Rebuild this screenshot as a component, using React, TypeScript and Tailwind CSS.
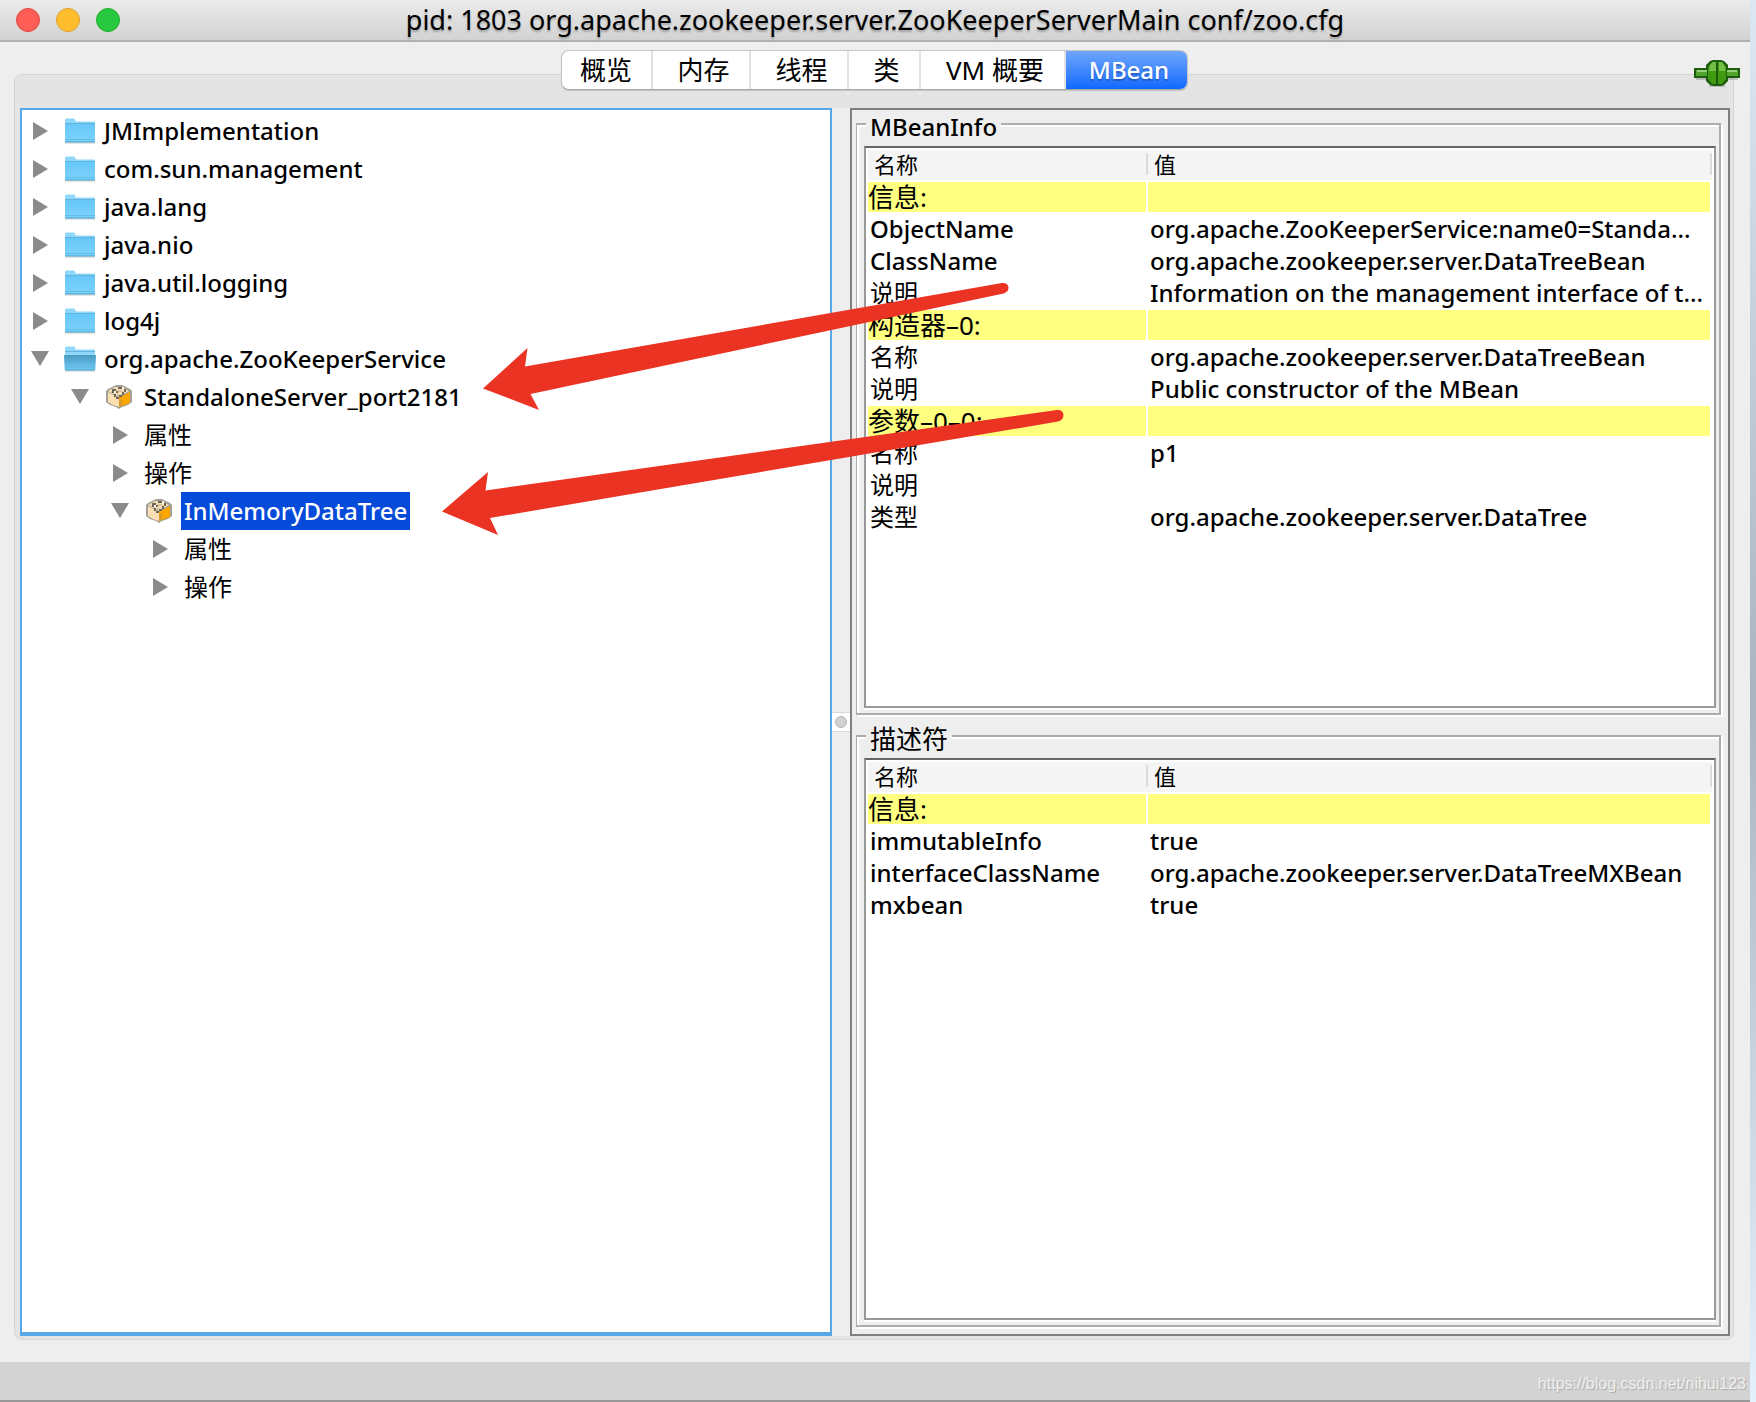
import type { ReactNode } from "react";

type IconKind = "folder" | "folder-open" | "bean";

interface TreeItem {
  label: string;
  level: number;
  open?: boolean;
  icon?: IconKind;
  selected?: boolean;
}

interface Row {
  name: string;
  value?: string;
  heading?: boolean;
}

const tabs = [
  { label: "概览", size: "w-[91px] text-[26px]" },
  { label: "内存", size: "w-[98px] pl-1.5 text-[26px]" },
  { label: "线程", size: "w-[98px] pl-1.5 text-[26px]" },
  { label: "类", size: "w-[72px] pl-1.5 text-[26px]" },
  { label: "VM 概要", size: "w-[145px] pl-1.5 text-[26px]" },
  { label: "MBean", size: "w-[121px] pl-1.5 text-[24px] font-medium", active: true },
];

const tree: TreeItem[] = [
  { label: "JMImplementation", level: 0, icon: "folder" },
  { label: "com.sun.management", level: 0, icon: "folder" },
  { label: "java.lang", level: 0, icon: "folder" },
  { label: "java.nio", level: 0, icon: "folder" },
  { label: "java.util.logging", level: 0, icon: "folder" },
  { label: "log4j", level: 0, icon: "folder" },
  { label: "org.apache.ZooKeeperService", level: 0, icon: "folder-open", open: true },
  { label: "StandaloneServer_port2181", level: 1, icon: "bean", open: true },
  { label: "属性", level: 2 },
  { label: "操作", level: 2 },
  { label: "InMemoryDataTree", level: 2, icon: "bean", open: true, selected: true },
  { label: "属性", level: 3 },
  { label: "操作", level: 3 },
];

const beanInfo: Row[] = [
  { name: "信息:", heading: true },
  { name: "ObjectName", value: "org.apache.ZooKeeperService:name0=Standa..." },
  { name: "ClassName", value: "org.apache.zookeeper.server.DataTreeBean" },
  { name: "说明", value: "Information on the management interface of t..." },
  { name: "构造器–0:", heading: true },
  { name: "名称", value: "org.apache.zookeeper.server.DataTreeBean" },
  { name: "说明", value: "Public constructor of the MBean" },
  { name: "参数–0–0:", heading: true },
  { name: "名称", value: "p1" },
  { name: "说明" },
  { name: "类型", value: "org.apache.zookeeper.server.DataTree" },
];

const descriptor: Row[] = [
  { name: "信息:", heading: true },
  { name: "immutableInfo", value: "true" },
  { name: "interfaceClassName", value: "org.apache.zookeeper.server.DataTreeMXBean" },
  { name: "mxbean", value: "true" },
];

const indents = ["pl-[9px]", "pl-[49px]", "pl-[89px]", "pl-[129px]"];

// Latin labels are set one step heavier than Chinese ones
function weight(text: string) {
  return /^[\u4e00-\u9fff]/.test(text) ? "font-normal" : "font-medium";
}

function Folder({ open }: { open?: boolean }) {
  return (
    <svg width="32" height="26" viewBox="0 0 32 26" className="shrink-0">
      <defs>
        <linearGradient id="folderFront" x1="0" y1="0" x2="0" y2="1">
          <stop offset="0" stopColor="#66c8f8" />
          <stop offset="1" stopColor="#7dd2fb" />
        </linearGradient>
        <linearGradient id="folderOpen" x1="0" y1="0" x2="0" y2="1">
          <stop offset="0" stopColor="#4a9cc4" />
          <stop offset="1" stopColor="#72c9f2" />
        </linearGradient>
      </defs>
      <path d="M1 24.5h30v1H1z" fill="#c9c9c9" />
      <path d="M1 2q0-1.500 1.500-1.500h7q1 0 1.500 1l.5 1.500q.3 .5 1 .5H30q1 0 1 1V24H1z" fill="#8fd8fc" />
      <path d="M1 5.500h30" stroke="#62b4dc" strokeWidth="1" fill="none" />
      {open ? (
        <path d="M0 9h32l-.7 15H.7z" fill="url(#folderOpen)" />
      ) : (
        <path d="M1 6h30v18H1z" fill="url(#folderFront)" />
      )}
      <path d="M1 21.500h30" stroke="#62bdea" strokeWidth="1" />
      <path d="M1 24h30" stroke="#3f9dcb" strokeWidth="1" />
    </svg>
  );
}

function Bean() {
  return (
    <svg width="26" height="24" viewBox="0 0 26 24" className="shrink-0">
      <path d="M10 0h6l4 2 4 2 2 2v11l-4 3-6 2-3 2-3-2-6-2-4-3V6l2-2 4-2z" fill="#a3a097" />
      <path d="M9 2h7l7 4-10 6L2 6z" fill="#f3dcb4" />
      <path d="M2 7l11 6v9l-6-2-5-3z" fill="#fbdfb2" />
      <path d="M13 13l11-6v11l-11 4z" fill="#ffa500" />
      <path d="M6 4h4v2H8v2H6zM12 2h4v2h-4zM8 9h2v3H8zM10 12h3v2h-3zM13 10h3v2h-3zM16 7h2v3h-2zM18 4h2v3h-2zM10 6h2v2h-2z" fill="#6f665a" />
      <path d="M12 5h4v2h-4zM11 9h2v2h-2z" fill="#d9c39b" />
      <path d="M16 2h2v3h-2zM8 6h2v2H8z" fill="#fff3dc" />
      <path d="M13 15l3-1v6l-3 2z" fill="#d99a2b" />
    </svg>
  );
}

function Plug() {
  return (
    <svg width="46" height="28" viewBox="0 0 46 28">
      <path d="M2 18h42v2H2zM15 25h16v2H15z" fill="#000" opacity=".18" />
      <path d="M0 8h12V5l4-4 3-1h8l3 1 4 4v3h12v10H34v3l-4 4-3 1h-8l-3-1-4-4v-3H0z" fill="#1d5c0c" />
      <path d="M2 10h11v6H2zM33 10h11v6H33z" fill="#4fa52c" />
      <path d="M3 10h10v2H3zM33 10h10v2H33z" fill="#93cf78" />
      <path d="M14 7l4-5h4v22h-4l-4-5zM24 2h4l4 5v12l-4 5h-4z" fill="#3f9a12" />
      <path d="M16 5l3-3h3v9h-7zM25 2h3l3 4v5h-6z" fill="#74bf45" />
    </svg>
  );
}

function TreeNode({ item }: { item: TreeItem }) {
  return (
    <li role="treeitem" aria-expanded={!!item.open} className={`flex h-[38px] items-center ${indents[item.level]}`}>
      <svg width="18" height="20" viewBox="0 0 18 20" className="shrink-0">
        {item.open ? <path d="M0 2h18L9 17z" fill="#8b8b8b" /> : <path d="M2 1v18l15-9z" fill="#8b8b8b" />}
      </svg>
      {item.icon && (
        <span className={item.icon === "bean" ? "ml-[17px] w-[26px]" : "ml-[15px] w-8"}>
          {item.icon === "bean" ? <Bean /> : <Folder open={item.icon === "folder-open"} />}
        </span>
      )}
      <span
        className={`flex h-full items-center whitespace-nowrap px-[3px] ${weight(item.label)} ${
          item.icon === "bean" ? "ml-[9px]" : item.icon ? "ml-[5px]" : "ml-3"
        } ${item.selected ? "bg-[#064ada] text-white" : ""}`}
      >
        {item.label}
      </span>
    </li>
  );
}

function AttributeTable({ rows, label }: { rows: Row[]; label: string }) {
  return (
    <div className="flex-1 border-2 border-[#999] border-t-[#666] bg-white p-0.5 shadow-[0_2px_0_#fff]">
      <table aria-label={label} className="w-full table-fixed border-collapse text-left">
        <colgroup>
          <col className="w-[280px]" />
          <col />
        </colgroup>
        <thead>
          <tr className="h-[30px] bg-[#f5f5f5] text-[22px] leading-7">
            <th className="p-0 align-top font-normal">
              <div className="flex items-center justify-between pl-1.5">
                名称
                <span className="h-[22px] w-0.5 bg-[#dcdcdc]" />
              </div>
            </th>
            <th className="p-0 align-top font-normal">
              <div className="flex items-center justify-between pl-1.5">
                值
                <span className="h-[22px] w-0.5 bg-[#dcdcdc]" />
              </div>
            </th>
          </tr>
        </thead>
        <tbody>
          {rows.map((row, i) => (
            <tr key={i} className="h-8 leading-[30px]">
              <td className="p-0 pt-0.5">
                <div
                  className={
                    row.heading
                      ? "mr-0.5 h-[30px] bg-[#ffff80] text-[26px]"
                      : `h-[30px] whitespace-nowrap pl-0.5 ${weight(row.name)}`
                  }
                >
                  {row.name}
                </div>
              </td>
              <td className="p-0 pt-0.5">
                <div className={row.heading ? "mr-0.5 h-[30px] bg-[#ffff80]" : "h-[30px] whitespace-nowrap pl-0.5 font-medium"}>
                  {row.value}
                </div>
              </td>
            </tr>
          ))}
        </tbody>
      </table>
    </div>
  );
}

function Group({ title, titleStyle, className, children }: { title: string; titleStyle: string; className: string; children: ReactNode }) {
  return (
    <section
      className={`relative flex flex-col border-2 border-l border-[#adadad] pb-[5px] pl-[7px] pr-[3px] pt-[21px] shadow-[2px_2px_0_#fff,inset_2px_2px_0_#fff] ${className}`}
    >
      <h2 className={`absolute -top-3 left-[9px] bg-[#eee] px-1 leading-7 ${titleStyle}`}>{title}</h2>
      {children}
    </section>
  );
}

export default function App() {
  return (
    <div className="relative flex min-h-screen overflow-hidden bg-[#dfe9f5] font-['Noto_Sans','Noto_Sans_CJK_SC',sans-serif] text-[24px] text-black">
      <div className="flex min-w-0 flex-1 flex-col bg-[#eee]">
        {/* Title bar */}
        <header className="relative flex h-[42px] items-center justify-center border-b-2 border-[#b1b1b1] bg-linear-to-b from-[#ebebeb] to-[#d2d2d2]">
          <div className="absolute left-4 flex gap-4">
            <button aria-label="Close" className="size-6 rounded-full border border-[#e2463f] bg-[#ff5f57]" />
            <button aria-label="Minimize" className="size-6 rounded-full border border-[#dfa023] bg-[#ffbd2e]" />
            <button aria-label="Zoom" className="size-6 rounded-full border border-[#1dad2b] bg-[#28c940]" />
          </div>
          <h1 className="whitespace-nowrap text-[27px] leading-10 [text-shadow:0_2px_2px_rgba(0,0,0,0.25)]">
            pid: 1803 org.apache.zookeeper.server.ZooKeeperServerMain conf/zoo.cfg
          </h1>
        </header>

        <main className="relative flex flex-1 flex-col px-[14px] pb-[22px] pr-4 pt-2">
          {/* Tabs */}
          <nav role="tablist" className="relative z-10 -mb-4 flex h-10 justify-center">
            <div className="flex overflow-hidden rounded-lg border border-[#c4c4c4] border-b-[#a9a9a9] bg-white shadow-[0_1px_1px_rgba(0,0,0,0.15)]">
              {tabs.map((tab) => (
                <button
                  key={tab.label}
                  role="tab"
                  aria-selected={!!tab.active}
                  className={`${tab.size} whitespace-nowrap leading-9 ${
                    tab.active
                      ? "bg-linear-to-b from-[#6ea6fb] to-[#0a68ff] text-white [text-shadow:0_2px_1px_rgba(0,0,0,0.25)]"
                      : "border-r-2 border-[#e2e2e2]"
                  }`}
                >
                  {tab.label}
                </button>
              ))}
            </div>
          </nav>
          <div className="absolute right-2.5 top-[18px] z-10">
            <Plug />
          </div>

          <div className="grid flex-1 grid-cols-[812fr_18px_880fr] rounded-lg border border-[#d6d6d6] bg-[#e4e4e4] px-[5px] pb-[3px] pr-[3px] pt-[33px]">
            {/* Tree */}
            <ul role="tree" className="min-w-0 border-2 border-b-4 border-[#58a8e8] bg-white pt-0.5">
              {tree.map((item, i) => (
                <TreeNode key={i} item={item} />
              ))}
            </ul>

            {/* Splitter */}
            <div className="flex flex-col items-center bg-[#eee] pt-[604px]">
              <div className="flex h-5 w-full items-center justify-center border-y border-[#d8d8d8] bg-white">
                <span className="size-3 rounded-full border border-[#b5b5b5] bg-[#d2d2d2]" />
              </div>
            </div>

            {/* Details */}
            <div className="flex min-w-0 flex-col border-2 border-[#808080] bg-[#eee] pb-[7px] pl-1 pr-[7px] pt-[13px]">
              <Group title="MBeanInfo" titleStyle="text-[24px] font-medium" className="flex-1">
                <AttributeTable label="MBeanInfo" rows={beanInfo} />
              </Group>
              <Group title="描述符" titleStyle="text-[26px]" className="mt-5 flex-1">
                <AttributeTable label="描述符" rows={descriptor} />
              </Group>
            </div>
          </div>
        </main>

        <footer className="h-10 border-b-2 border-[#999] bg-[#d3d3d3]" />
      </div>
      <div className="w-1.5 bg-linear-to-b from-[#dce8f4] via-[#a9b4bf] to-[#e4f0fc]" />

      <span className="absolute bottom-2 right-2.5 font-['Liberation_Sans',sans-serif] text-base leading-5 text-[#f0f0f0] [text-shadow:1px_1px_1px_rgba(0,0,0,0.2)]">
        https://blog.csdn.net/nihui123
      </span>

      {/* Red arrows drawn over the window */}
      <svg width="1100" height="600" viewBox="0 0 1100 600" className="pointer-events-none absolute left-0 top-0 z-20" fill="#ea3323">
        <path d="M483 388.500L527.500 348l-2.500 18.500L1002 283q6-.5 6.500 4.500 0 4.500-5 6L530.500 394l8.500 16z" />
        <path d="M442 511.500l46-39.500-2.500 18.500L1057 410q6-.5 6.500 5 0 5-5.500 6.500L490 518l8 17z" />
      </svg>
    </div>
  );
}
